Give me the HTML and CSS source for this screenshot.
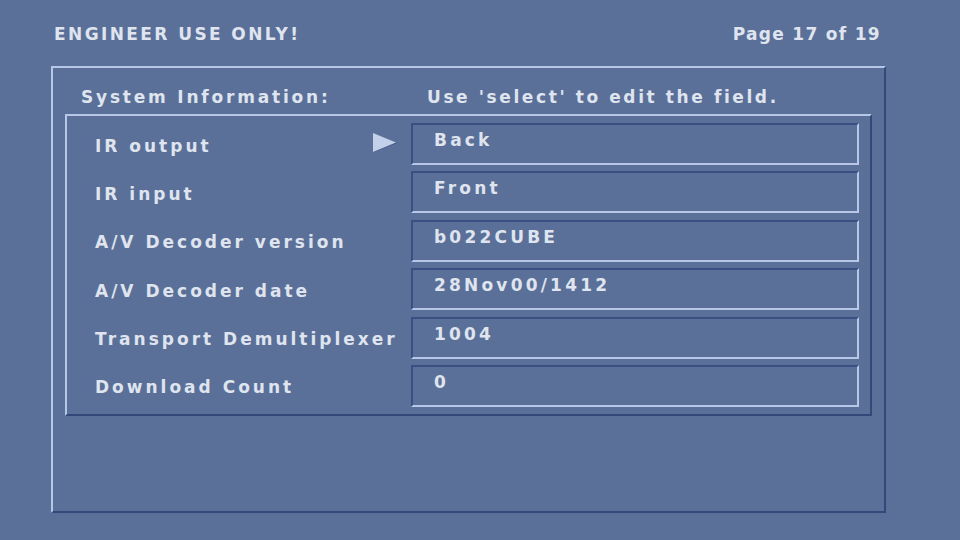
FILE: index.html
```html
<!DOCTYPE html>
<html>
<head>
<meta charset="utf-8">
<link rel="stylesheet" href="styles.css">
</head>
<body>
<div class="screen">
  <header class="top">
    <span class="title">ENGINEER USE ONLY!</span>
    <span class="page">Page 17 of 19</span>
  </header>
  <section class="outer">
    <div class="heading">
      <span class="h-left">System Information:</span>
      <span class="h-right">Use 'select' to edit the field.</span>
    </div>
    <div class="inner">
      <div class="row">
        <span class="label">IR output</span>
        <span class="pointer"><svg width="27" height="20" viewBox="0 0 27 20"><polygon points="2,1 25,10 2,19" fill="#3c5282"/><polygon points="1,0 24,9.5 1,19" fill="#c3d0ea"/></svg></span>
        <span class="field">Back</span>
      </div>
      <div class="row">
        <span class="label">IR input</span>
        <span class="pointer"></span>
        <span class="field">Front</span>
      </div>
      <div class="row">
        <span class="label">A/V Decoder version</span>
        <span class="pointer"></span>
        <span class="field">b022CUBE</span>
      </div>
      <div class="row">
        <span class="label">A/V Decoder date</span>
        <span class="pointer"></span>
        <span class="field">28Nov00/1412</span>
      </div>
      <div class="row">
        <span class="label">Transport Demultiplexer</span>
        <span class="pointer"></span>
        <span class="field">1004</span>
      </div>
      <div class="row">
        <span class="label">Download Count</span>
        <span class="pointer"></span>
        <span class="field">0</span>
      </div>
    </div>
  </section>
</div>
</body>
</html>
```
FILE: styles.css
```css
* { box-sizing: border-box; }
html, body { margin: 0; padding: 0; }
body {
  width: 960px;
  height: 540px;
  background: #5a7099;
  color: #dfe4ee;
  font-family: "DejaVu Sans", "Liberation Sans", sans-serif;
  font-weight: bold;
  font-size: 17px;
  letter-spacing: 2.4px;
  overflow: hidden;
}
.screen {
  padding: 24px 80px 0 53px;
}
.top {
  display: flex;
  justify-content: space-between;
  align-items: center;
  height: 20px;
  line-height: 20px;
  margin-left: 1px;
}
.page { letter-spacing: 1.3px; margin-right: -1px; }
.outer {
  margin-top: 22px;
  margin-left: -2px;
  width: 835px;
  height: 447px;
  border-top: 2px solid #b6c7e8;
  border-left: 2px solid #b6c7e8;
  border-right: 2px solid #34497a;
  border-bottom: 2px solid #34497a;
  padding: 0 0 0 12px;
}
.heading {
  display: flex;
  height: 46px;
  align-items: center;
  padding-top: 11px;
  padding-left: 16px;
}
.h-left { width: 346px; letter-spacing: 2.8px; white-space: nowrap; }
.h-right { letter-spacing: 2.6px; white-space: nowrap; }
.inner {
  width: 807px;
  height: 302px;
  border-top: 2px solid #b6c7e8;
  border-left: 2px solid #b6c7e8;
  border-right: 2px solid #34497a;
  border-bottom: 2px solid #34497a;
  padding: 7px 11px 0 0;
  display: flex;
  flex-direction: column;
  gap: 6.4px;
}
.row {
  display: grid;
  grid-template-columns: 277px 67px 1fr;
  height: 42px;
  align-items: center;
}
.label {
  padding-left: 28px;
  white-space: nowrap;
  padding-top: 3px;
  letter-spacing: 3px;
}
.pointer {
  display: flex;
  align-items: center;
  padding-left: 28px;
  padding-bottom: 2px;
}
.pointer svg { display: block; }
.field {
  height: 42px;
  border-top: 2px solid #3a5082;
  border-left: 2px solid #3a5082;
  border-right: 2px solid #b6c7e8;
  border-bottom: 2px solid #b6c7e8;
  padding: 5px 0 0 21px;
  line-height: 20px;
  letter-spacing: 3.2px;
}
```
